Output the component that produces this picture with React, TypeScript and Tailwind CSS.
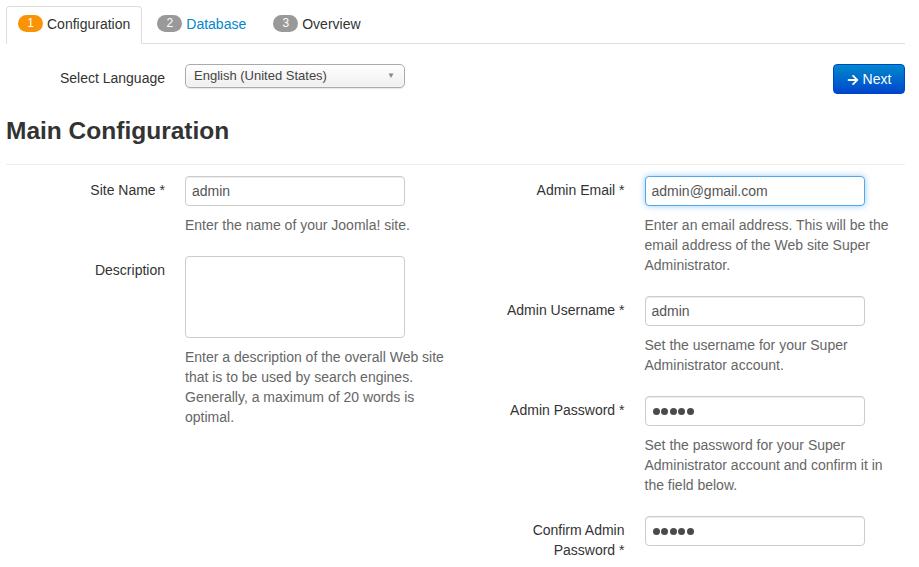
import { FaArrowRight } from "react-icons/fa";

const font = { fontFamily: '"Liberation Sans", Arial, sans-serif' };

type Field = {
  label: string[];
  value?: string;
  kind?: "text" | "area" | "password";
  focused?: boolean;
  help: string;
};

const leftFields: Field[] = [
  { label: ["Site Name *"], value: "admin", help: "Enter the name of your Joomla! site." },
  {
    label: ["Description"],
    kind: "area",
    help: "Enter a description of the overall Web site that is to be used by search engines. Generally, a maximum of 20 words is optimal.",
  },
];

const rightFields: Field[] = [
  {
    label: ["Admin Email *"],
    value: "admin@gmail.com",
    focused: true,
    help: "Enter an email address. This will be the email address of the Web site Super Administrator.",
  },
  { label: ["Admin Username *"], value: "admin", help: "Set the username for your Super Administrator account." },
  {
    label: ["Admin Password *"],
    kind: "password",
    help: "Set the password for your Super Administrator account and confirm it in the field below.",
  },
  { label: ["Confirm Admin", "Password *"], kind: "password", help: "" },
];

const Tab = ({ n, text, active, link }: { n: number; text: string; active?: boolean; link?: boolean }) => (
  <div
    className={
      "flex items-center h-[38px] pb-[3px] px-[11px] mb-[-1px] border rounded-t-[4px] " +
      (active ? "border-[#ddd] border-b-white bg-white" : "border-transparent")
    }
  >
    <span
      className={
        "w-[25px] h-[17px] rounded-full text-white text-[12px] leading-[17px] text-center mr-[4px] " +
        (active ? "bg-[#f89406]" : "bg-[#999]")
      }
    >
      {n}
    </span>
    <span className={"text-[14px] leading-5 " + (link ? "text-[#0088cc]" : "text-[#333]")}>{text}</span>
  </div>
);

const Row = ({ f }: { f: Field }) => (
  <div className="flex mb-[21px]">
    <div className="w-[159px] shrink-0 text-right pt-[4px] text-[14px] leading-5 text-[#333]">
      {f.label.map((l) => (
        <div key={l}>{l}</div>
      ))}
    </div>
    <div className="ml-[20px] flex-1">
      {f.kind === "area" ? (
        <div className="w-[220px] h-[82px] border border-[#ccc] rounded-[4px] bg-white" />
      ) : (
        <div
          className={
            "w-[220px] h-[30px] rounded-[4px] bg-white flex items-center px-[6px] text-[14px] text-[#555] border " +
            (f.focused
              ? "border-[#52a8ec] shadow-[0_0_6px_rgba(82,168,236,0.6)]"
              : "border-[#ccc] shadow-[inset_0_1px_1px_rgba(0,0,0,0.075)]")
          }
        >
          {f.kind === "password" ? (
            <div className="flex gap-[1.5px] ml-[1px]">
              {[0, 1, 2, 3, 4].map((i) => (
                <span key={i} className="w-[7px] h-[7px] rounded-full bg-[#4a4a4a]" />
              ))}
            </div>
          ) : (
            f.value
          )}
        </div>
      )}
      {f.help && <p className="mt-[9px] text-[14px] leading-5 text-[#666]">{f.help}</p>}
    </div>
  </div>
);

export default function App() {
  return (
    <div className="w-[919px] h-[567px] bg-white overflow-hidden pl-[6px] pr-[14px] pt-[6px]" style={font}>
      <div className="flex gap-[3px] border-b border-[#ddd]">
        <Tab n={1} text="Configuration" active />
        <Tab n={2} text="Database" link />
        <Tab n={3} text="Overview" />
      </div>

      <div className="flex items-start justify-between mt-[20px]">
        <div className="flex items-center">
          <div className="w-[159px] text-right text-[14px] leading-5 text-[#333] mt-[4px]">Select Language</div>
          <div className="ml-[20px] w-[220px] h-[24px] border border-[#aaa] rounded-[5px] bg-gradient-to-b from-white to-[#eee] flex items-center justify-between pl-[8px] pr-[9px] text-[13px] text-[#444] shadow-[0_0_3px_white_inset,0_1px_1px_rgba(0,0,0,0.1)]">
            <span>English (United States)</span>
            <span className="text-[8px] text-[#888]">▼</span>
          </div>
        </div>
        <button className="h-[30px] w-[72px] rounded-[4px] bg-gradient-to-b from-[#0088cc] to-[#0044cc] border border-[#0044cc] text-white text-[14px] leading-5 flex items-center justify-center gap-[4px] pb-[1px]">
          <FaArrowRight className="text-[12px] mt-[2px]" />
          Next
        </button>
      </div>

      <h2 className="text-[24.5px] font-bold text-[#333] leading-[40px] mt-[17px]">Main Configuration</h2>
      <div className="border-t border-[#eee] mt-[13px] mb-[11px]" />

      <div className="grid grid-cols-2 gap-x-[20px]">
        <div>
          {leftFields.map((f) => (
            <Row key={f.label[0]} f={f} />
          ))}
        </div>
        <div>
          {rightFields.map((f) => (
            <Row key={f.label[0]} f={f} />
          ))}
        </div>
      </div>
    </div>
  );
}
